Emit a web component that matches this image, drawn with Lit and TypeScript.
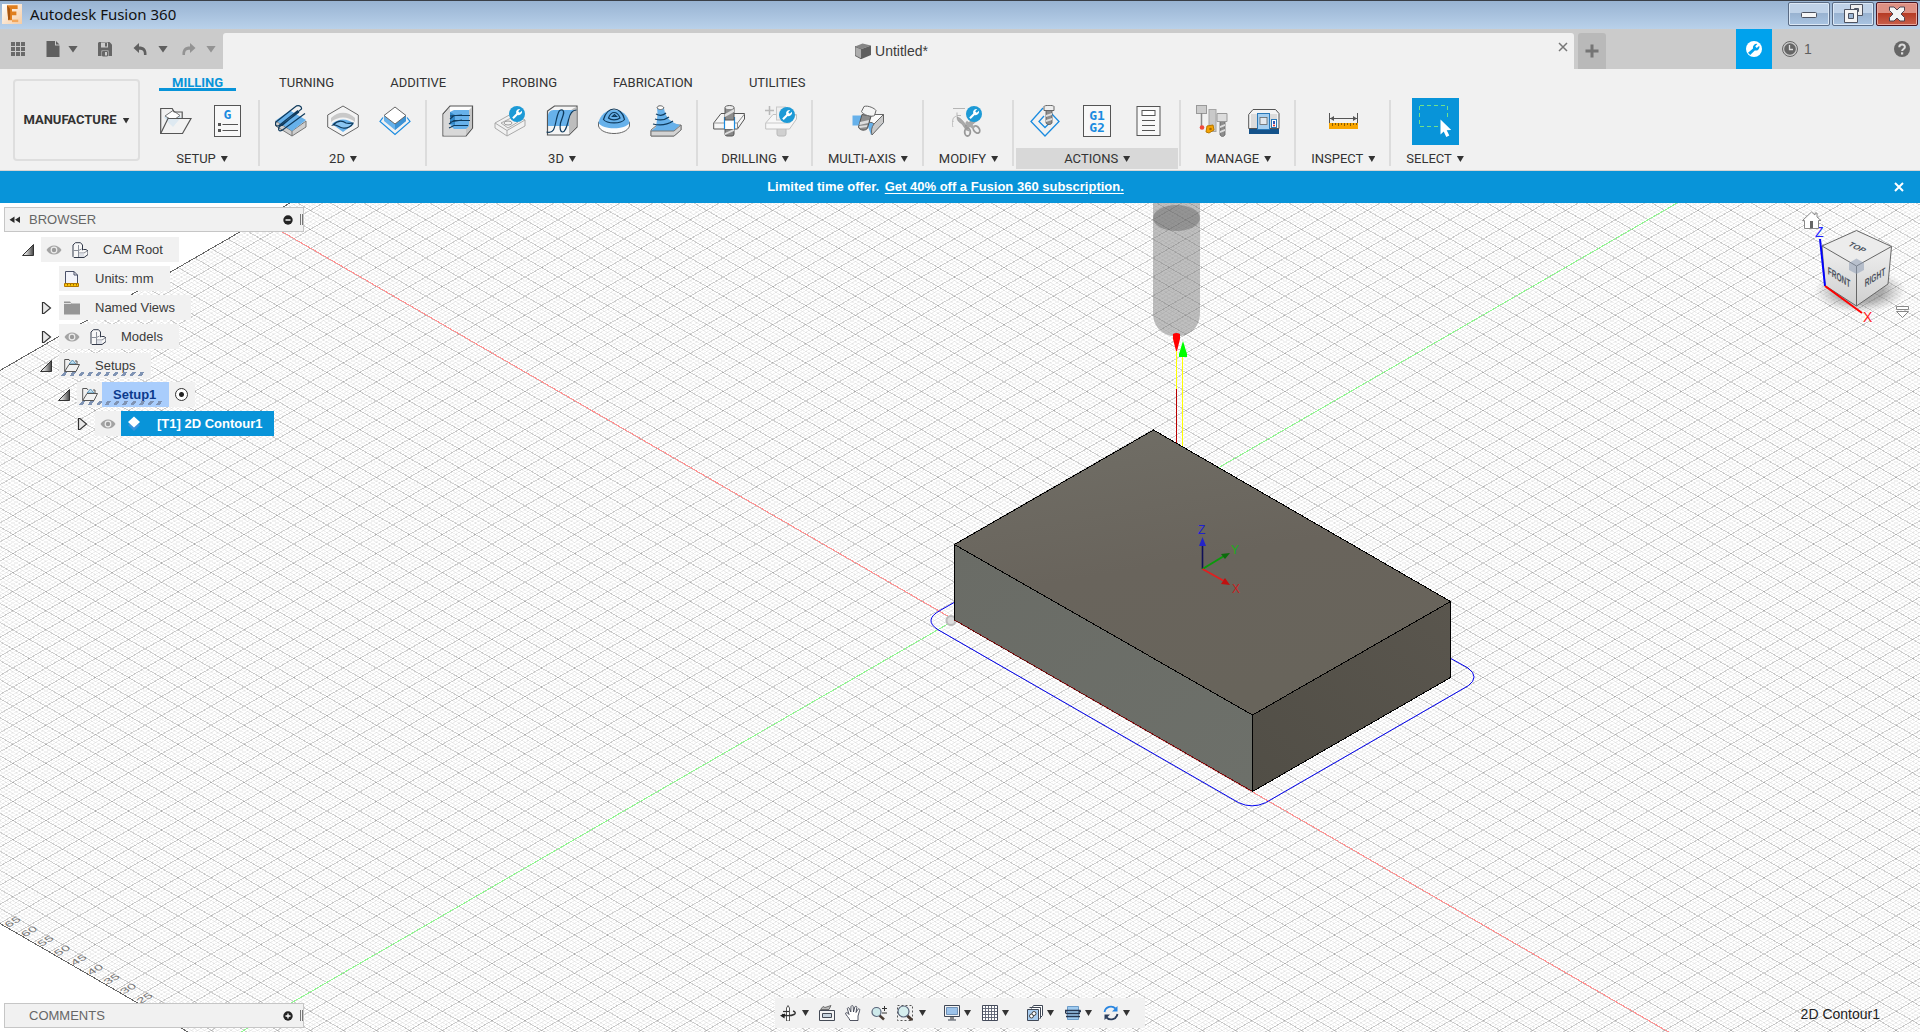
import { LitElement, html, svg, css, nothing } from "lit";
import { customElement, property, state } from "lit/decorators.js";

/* ---------- icon artwork ---------- */

const wrenchBadge = (x: number, y: number) => svg`
  <circle cx=${x} cy=${y} r="8" fill="#1d9ad6"/>
  <path transform="translate(${x - 8} ${y - 8})" d="M3.2 11.400 7.200 7.400A3.500 3.500 0 0 1 11.200 3L9.200 5.200 10.700 6.700 13 4.700A3.500 3.500 0 0 1 8.700 9L4.700 13Z" fill="#fff"/>`;

const ICONS: Record<string, any> = {
  setup: svg`
    <path d="M4 12 13 5l8 7-8 10z" fill="#cfe2ee"/><path d="M5 11 13 5.500l7 5-7 5z" fill="#fff" stroke="#777"/>
    <path d="M.7 28.500V3.500h11.500l2 3.500h8v6" fill="none" stroke="#555" stroke-width="1.200"/>
    <path d="M8 13.500h12l-7 8-6-5z" fill="#cfe2ee"/>
    <path d="M.7 28.500 8 13.500h23L22.500 28.500z" fill="#f4f4f4" fill-opacity=".4" stroke="#555" stroke-width="1.200"/>`,
  gsheet: svg`
    <rect x="2.500" y=".5" width="26" height="31" fill="#f8f8f8" stroke="#555"/>
    <text x="15.500" y="14" class="mono" font-size="13" text-anchor="middle">G</text>
    <path d="M6 18h3v3H6zM6 24h3v3H6z" fill="#555"/><path d="M10.500 19.500h15.500M10.500 25.500h15.500" stroke="#555"/>`,
  adaptive: svg`
    <path d="M.7 16v5L17 31l14-9v-6L17 26z" fill="#cfcfcf" stroke="#777"/><path d="M17 26v5" stroke="#777"/>
    <path d="M.7 15.500 15 5.500l16 9.500-14 11z" fill="#67b1ea"/>
    <path d="M1 17 20 2c3-2.500 7-1 6.500 2L7 20.500M4 22 24 7M4 22c-1 3 0 5 3.500 3L30 8.500M1 17c-1.500 2.500 0 5 3 3.500L23 5.500" fill="none" stroke="#0f3a5c" stroke-width="1.200"/>`,
  pocket: svg`
    <path d="M16 1 31.300 10v12L16 31 .7 22V10z" fill="#f4f4f4" stroke="#666"/>
    <path d="M4 13c7-7 17-7 24 0v4c-7-6-17-6-24 0z" fill="#c9c9c9"/>
    <path d="M5 19c6-6 16-6 22 0l-11 8z" fill="#67b1ea"/>
    <path d="M6 20c5-5 10-4 13-2 3 1 5 0 7 0-1 3-6 6-10 5-4 0-6-4-10-3z" fill="#8ac5f1" stroke="#0f3a5c" stroke-width="1.200"/>`,
  contour: svg`
    <path d="M4 12.500 1 16.500 16 29.500 31 16.500 28 12.500" fill="none" stroke="#1a8be0" stroke-width="1.200"/>
    <path d="M5 10v6l11 9 11-9v-6l-11 9z" fill="#67b1ea"/><path d="M16 19v6l11-9v-6z" fill="#3d92d4"/>
    <path d="M16 2 27 10.500 16 19 5 10.500z" fill="#fff" stroke="#666"/>`,
  clear3d: svg`
    <path d="M1 31V9l7-8h22.500v22L24 31z" fill="#fdfdfd" stroke="#555" stroke-width="1.200"/>
    <path d="M1.500 30.500V9.500L8 2v20h16v8.500z" fill="#d8d8d8"/><path d="M24 30 30 23V2L27 5v15l-3 3z" fill="#c5c5c5"/>
    <path d="M8 7l4-2h15v16l-3 3H12l-4-4z" fill="#67b1ea"/><path d="M8 7l5 3v10l-5-1z" fill="#3489c9"/>
    <path d="M28 10.500H12L8 14M28 15.500H12L7 19M26 20.500H12L7 23M8 11l12-1M8 17l12-2" fill="none" stroke="#0f3a5c" stroke-width="1.200"/>`,
  flat3d: svg`
    <path d="M1 18 19 8l12 7v6L13 31 1 23z" fill="#f2f2f2" stroke="#aaa"/><path d="M1 18l12 7.500L31 15M13 25.500V31" fill="none" stroke="#aaa"/>
    <path d="M7 18l10-5 7 4-10 6z" fill="none" stroke="#aaa"/><ellipse cx="14" cy="18" rx="4" ry="2" fill="none" stroke="#999"/>${wrenchBadge(23, 9)}`,
  parallel: svg`
    <path d="M1.500 30V6l7-5h22.500v21l-8 8z" fill="#f5f5f5" stroke="#555" stroke-width="1.200"/>
    <path d="M23 29.500V10c1-5 4-7 7.500-8v20z" fill="#bdbdbd"/>
    <path d="M2 21V10c1-4 3-5 7-5h20c-4 2-5 5-6 9v7z" fill="#67b1ea"/>
    <path d="M.5 27c7 2 8-3 10-13 2-8 3-10 6-9 3 2 0 6-2 13-1 6 0 9 2 9 3 0 4-5 6-12 1-5 3-10 8-10" fill="none" stroke="#0f3a5c" stroke-width="1.200"/>`,
  scallop: svg`
    <path d="M.5 17v4c3 10 28 10 31 0v-4z" fill="#fcfcfc" stroke="#666"/>
    <path d="M.5 18C3 .5 29 .5 31.500 18 27 25 5 25 .5 18z" fill="#67b1ea"/>
    <path d="M5.500 14.500C8 6 13 4 16 4c4 0 9 3 10.500 10.500C23 19 9 19 5.500 14.500zM10.500 13C12 9 14 7.500 16 7.500S20.500 9 22 13c-3 2.500-9 2.500-11.500 0zM14.500 11.500l2-2 2 2z" fill="none" stroke="#0f3a5c" stroke-width="1.200"/>`,
  steep: svg`
    <path d="M1 25 7 20h24v5l-7 6H1z" fill="#d9d9d9" stroke="#777"/>
    <path d="M6 22C7 15 8 8 7 3h7c1 9 7 15 16 17l-6 6H1z" fill="#67b1ea"/><path d="M7 3c0-3 6-3 7 0-2 2-5 2-7 0z" fill="#fff" stroke="#666"/>
    <path d="M6 9c4 2 8 1 10-1M5 14c6 2 10 1 14-2M3 19c8 2 14 1 20-3" fill="none" stroke="#0f3a5c" stroke-width="1.200"/>
    <path d="M1 26h23l7-6v5l-7 6H1z" fill="#d3d3d3" stroke="#777"/>`,
  drill: svg`
    <rect x="12" y="22" width="9" height="9" rx="2" fill="#888" stroke="#555"/>
    <path d="M.7 18 8 8.500h23.500V14L24.500 24H.7z" fill="#f6f6f6" stroke="#555"/><path d="M24.500 24v-6l7-9" fill="none" stroke="#888"/><path d="M1 18h23.500" stroke="#999"/>
    <path d="M12 13h9v11h-9z" fill="#fff"/><path d="M11.500 12v12M21.500 12v12" stroke="#1a8be0" stroke-width="1.200"/>
    <path d="M12 2.500c0-2.500 9-2.500 9 0V15h-9z" fill="#8d8d8d" stroke="#555"/><path d="M12 9l9-5v3l-9 5z" fill="#ddd"/><path d="M12 28l9-4v2l-9 4z" fill="#ddd"/><ellipse cx="16.500" cy="2.500" rx="4" ry="1.500" fill="#eee"/>`,
  drillNew: svg`
    <g opacity=".45"><rect x="12" y="22" width="9" height="9" rx="2" fill="#aaa" stroke="#777"/>
    <path d="M.7 18 8 9.500h23.500V14L24.500 24H.7z" fill="#fff" stroke="#888"/><path d="M1 18h23.500l6-8" fill="none" stroke="#999"/><rect x="11.500" y="2" width="9" height="13" fill="#eee" stroke="#999"/>
    <path d="M4.500 1v9M0 5.500h9" stroke="#777" stroke-width="1.500"/></g>${wrenchBadge(22, 10)}`,
  multi: svg`
    <path d="M.5 10.500H20v10H.5z" fill="#67b1ea"/><path d="M14 16 22 10h9.500v8L19 30z" fill="#67b1ea"/>
    <path d="M22 19 31.500 9.500v8L20 30c-1-4-.5-8 2-11z" fill="#c9c9c9" stroke="#666"/><path d="M20 9.500h11.500L22 19c-2-2-4-2-6-1z" fill="#fafafa" stroke="#666"/>
    <path d="M10 9.500 6.500 22c1 4 8 4 9 1L19 11z" fill="#8d8d8d" stroke="#555"/><path d="M8 17l9-2-.7 3-9 2zM7 21l8.500-1-.7 2-7 1z" fill="#ddd"/>
    <path d="M12 1.500c4-1.500 11 2 12 4l-1.500 5C20 12.500 11 10 9.500 6.500z" fill="#f4f4f4" stroke="#666"/>`,
  modify: svg`
    <path d="M1 3.500h12M5 7.500v3h4M1 17c-1-3 1-6 5-6" fill="none" stroke="#b5b5b5"/><path d="M1 22c-1-2-1-4 0-6" fill="none" stroke="#bbb"/>
    <path d="M5 12c4 1 6 4 9 8l3 6-3-1-4-6c-3-2-5-3-5-7zM27 14 15 24l-2-3 10-9z" fill="#a9a9a9" stroke="#888" stroke-width=".5"/>
    <ellipse cx="15.500" cy="27" rx="2.800" ry="4" fill="none" stroke="#999" stroke-width="1.800"/><ellipse cx="24.500" cy="24.500" rx="2.800" ry="4" transform="rotate(-35 24.500 24.500)" fill="none" stroke="#999" stroke-width="1.800"/><path d="M14 17l8 6" stroke="#a9a9a9" stroke-width="3"/>${wrenchBadge(22, 9)}`,
  simulate: svg`
    <path d="M14 3 2 16.500 16 31 30 16.500 22 8" fill="none" stroke="#1a8be0" stroke-width="1.300"/><path d="M15 11l-5 5.500 6 6 6-6-3-3" fill="none" stroke="#1a8be0" stroke-width="1.300"/>
    <path d="M17 5h6v13c-1 2-5 2-6 0z" fill="#8d8d8d" stroke="#555" stroke-width=".8"/><path d="M17 10l6-2v2l-6 2zM17 15l6-2v2l-6 2z" fill="#ddd"/><path d="M15 1.500c0-1.500 10-1.500 10 0v4H15z" fill="#eee" stroke="#666"/>`,
  post: svg`
    <rect x="2.500" y=".5" width="27" height="31" fill="#f8f8f8" stroke="#555"/>
    <text x="16" y="15" class="mono" font-size="13" text-anchor="middle">G1</text><text x="16" y="26.500" class="mono" font-size="13" text-anchor="middle">G2</text>`,
  sheet: svg`
    <rect x="4" y="1.500" width="23" height="29" fill="#f8f8f8" stroke="#555"/><rect x="9" y="5.500" width="13" height="5" fill="#fff" stroke="#555"/>
    <path d="M9 15.500h13M9 20.500h13M9 25.500h13" stroke="#555"/>`,
  tools: svg`
    <rect x=".5" y=".5" width="10" height="8" fill="#ccc" stroke="#999"/><path d="M5.500 8v13" stroke="#888" stroke-width="1.500"/><circle cx="6" cy="22.500" r="2.300" fill="#f24a3d"/>
    <rect x="13" y="4.500" width="7" height="22" fill="#c9c9c9" stroke="#a5a5a5"/><path d="M11 21l6-1 1 5-5 3-3-1z" fill="#f5a300" stroke="#b87900"/><circle cx="14.500" cy="24" r="1.300" fill="#a86b00"/>
    <path d="M24 16h5v14l-2.500 2L24 30z" fill="#8d8d8d" stroke="#666" stroke-width=".8"/><path d="M24 21l5-2v2l-5 2zM24 26l5-2v2l-5 2z" fill="#ddd"/><path d="M21 8.500h10v8H21z" fill="#ddd" stroke="#999"/>`,
  machine: svg`
    <path d="M1 29V23h30v6z" fill="#14528a"/><path d="M.7 23.500V9.500L5 4.500h22.500L31 8.500V23.500z" fill="#f4f4f4" stroke="#555"/><path d="M3 9h26v14H3z" fill="#dcdcdc"/>
    <rect x="9.500" y="8.500" width="12" height="16" fill="#a5cff0" stroke="#2a79b8"/><rect x="12" y="12.500" width="7" height="7" fill="#e3e9ee" stroke="#666" stroke-width=".8"/>
    <rect x="23.500" y="14.500" width="5" height="8" fill="#fff" stroke="#2a79b8"/><path d="M25 16h2v3h-2z" fill="#3656b5"/><circle cx="26" cy="20.500" r="1" fill="#d22"/>`,
  inspect: svg`
    <path d="M2.500 8v10M30.500 8v10M3 13.500h27" stroke="#555"/><path d="M3 13.500l4-2.500v5zM30 13.500l-4-2.500v5z" fill="#555"/>
    <rect x="2" y="18" width="29" height="6" fill="#f9a600"/><path d="M5.500 18v3M8.500 18v2M11.500 18v3M14.500 18v2M17.500 18v3M20.500 18v2M23.500 18v3M26.500 18v2M29.500 18v2" stroke="#8a5c00"/>`,
  select: svg`
    <path d="M1 .5h27M.5 1v21M28.500 1v13M1 21.500h18" stroke="#6fe08a" stroke-dasharray="4 3" fill="none"/>
    <path d="M21.500 14.500V29.500l3.200-3 2.600 5.500 3-1.400-2.600-5.300 4.600-.3z" fill="#fff"/>`,
  /* 16px set */
  apps: svg`<path d="M1 1h4v4H1zM6 1h4v4H6zM11 1h4v4h-4zM1 6h4v4H1zM6 6h4v4H6zM11 6h4v4h-4zM1 11h4v4H1zM6 11h4v4H6zM11 11h4v4h-4z" fill="#6a6a6a"/>`,
  file: svg`<path d="M1.500 0h8.500v4.500h4.500V16h-13zM11 0l3.500 3.500H11z" fill="#5f5f5f"/>`,
  save: svg`<path d="M2 1h10.500L15 3.500V15H1V2z" fill="#666"/><path d="M4 1.500h7v5H4zM4.500 9.500h7v5.500h-7z" fill="#cbcbcb"/><path d="M8 2h2v3.500H8zM6 11h2v4H6z" fill="#666"/><path d="M5.500 10.500h5V15h-5z" fill="none" stroke="#666"/>`,
  undo: svg`<path d="M7 2 1.500 7l5.500 5V8.700c4 0 5 1.300 5 5.300h2.500C15 8 12 5.500 7 5.500z" fill="#606060"/>`,
  redo: svg`<path d="M9 2l5.500 5L9 12V8.700c-4 0-5 1.300-5 5.300H1.500C1 8 4 5.500 9 5.500z" fill="#939393"/>`,
  doc: svg`<path d="M0 3.500 6.500 6v10L0 12.500z" fill="#adadad" stroke="#666"/><path d="M0 3.500 7.500.5 16 2.500 6.500 6z" fill="#868686"/><path d="M6.500 6 16 2.500V12l-9.500 4z" fill="#5f5f5f"/>`,
  wrench: svg`<circle cx="8" cy="8" r="8" fill="#fff"/><path d="M2 11.800 7 7.600A3.800 3.800 0 0 1 11.400 2.900L9.200 5.300 10.700 6.900 13.300 4.700A3.800 3.800 0 0 1 8.800 9.500L4.200 14z" fill="#00a2ed"/>`,
  clock: svg`<circle cx="8" cy="8" r="7.500" fill="#cbcbcb" stroke="#666"/><circle cx="8" cy="8" r="5.800" fill="#666"/><path d="M7.500 4v4.500H11" fill="none" stroke="#ddd" stroke-width="1.300"/>`,
  help: svg`<circle cx="8" cy="8" r="8" fill="#666"/><path d="M5.300 6.200c0-3.500 5.600-3.500 5.600-.2 0 1.900-2.800 2-2.800 4" fill="none" stroke="#ddd" stroke-width="2"/><path d="M7 11.300h2.200v2.200H7z" fill="#ddd"/>`,
  close: svg`<path d="M4 4l8 8M12 4l-8 8" stroke="currentColor" stroke-width="2"/>`,
  plus: svg`<path d="M1.500 8h13M8 1.500v13" stroke="#757575" stroke-width="3"/>`,
  eye: svg`<path d="M.5 8C4 2 12 2 15.500 8 12 14 4 14 .5 8z" fill="#a3a3a3"/><circle cx="8" cy="8" r="2.800" fill="#9a9a9a" stroke="#ececec" stroke-width="1.200"/>`,
  body: svg`<path d="M1 3 3.500.7h5L10.500 3v5l1-.5h2.500l2 1.500v3.500L12 15.500H2L1 14.500z" fill="#f8f8f8" stroke="#333a4a"/><path d="M1.500 8.500h5v6.500M6.500 8.500 9.500 7M6.500 8.500V3M7 11h5l3-2" fill="none" stroke="#8a8f99"/><path d="M7 11.500h5v3.500H7z" fill="#dcdfe6"/>`,
  units: svg`<path d="M1.500 13V.5H10L13.500 4v9z" fill="#f3f4fa" stroke="#4a5068"/><path d="M10 .5V4h3.500" fill="none" stroke="#4a5068"/><path d="M.5 12.500h14v3H.5z" fill="#f9c208" stroke="#b37700"/><path d="M3.500 13v1.500M6.500 13v1.500M9.500 13v1.500M12.500 13v1.500" stroke="#7a5200" stroke-width=".8"/>`,
  folder: svg`<path d="M0 1.500h6l1.500 2H16V14.500H0z" fill="#969696"/><path d="M0 3.500h7" stroke="#e2e2e2"/>`,
  open: svg`<path d="M5 6l3.500-4L12 6z" fill="#bfe0f2" stroke="#5c92b5"/><path d="M.7 13.500V1.500H5l1 1.500M11 3h2v3" fill="none" stroke="#555"/><path d="M.7 13.500 5 6.500h10.500L12 13.500z" fill="#f1f1f1" stroke="#555"/>`,
  contourSmall: svg`<path d="M8 5 14 9 8 15 2 9z" fill="#3a93dc"/><path d="M8 .5 14 6 8 11.500 2 6z" fill="#fff"/>`,
  back: svg`<path d="M7.500 4.500v6.500L2.500 7.800zM13 4.500v6.500L8 7.800z" fill="#2a2a2a"/>`,
  minus: svg`<circle cx="8" cy="8" r="4.700" fill="#222"/><path d="M5.500 8h5" stroke="#fff" stroke-width="1.400"/>`,
  add: svg`<circle cx="8" cy="8" r="4.700" fill="#222"/><path d="M5.500 8h5M8 5.500v5" stroke="#fff" stroke-width="1.300"/>`,
  expanded: svg`<defs><linearGradient id="tg"><stop offset=".3" stop-color="#ddd"/><stop offset="1" stop-color="#444"/></linearGradient></defs><path d="M2.500 13.500 13.500 2.500v11z" fill="url(#tg)" stroke="#333"/>`,
  collapsed: svg`<path d="M4.500 2.500H6L12.500 8 6 13.500H4.500z" fill="#e8e8e8" stroke="#333" stroke-width="1.200"/>`,
  orbit: svg`<path d="M6.500 16V3L8 .5 9.500 3v13z" fill="#fff" stroke="#444" stroke-width=".9"/><path d="M13 6c2.500.5 3 2.500 1 3.500-3 1.500-9 1.500-12 0" fill="none" stroke="#333" stroke-width="1.400"/><path d="M3 6.500h6" stroke="#333" stroke-width="1.200"/><path d="M5 8.500 0 10.500l4.500 3z" fill="#222"/>`,
  look: svg`<path d="M.5 5.500h15v10H.5z" fill="#f4f4f4" stroke="#444a55"/><path d="M3.500 8.500h9v4h-9z" fill="#c8d4de" stroke="#444a55"/><path d="M1.500 4.500 4 1.500l2 1 6-2-2 4z" fill="#bbb" stroke="#555" stroke-width=".8"/>`,
  hand: svg`<path d="M5 15.500C4 12.500 1 10.500.5 8.200 1.500 7 3 8 4 9.500L2.300 3.500c.7-1.500 1.900-.8 2.300.4L5.800 7 6 1.500c.6-1.300 2-1.200 2.200 0L8.500 7l1.300-5c.7-1.200 2-.8 2 .4L11 7.500l2-3.300c.9-.9 2-.2 1.700 1L13 11v4.500z" fill="#fff" stroke="#3d4250" stroke-width=".9"/>`,
  zoom: svg`<path d="M8 10l5 4.500" stroke="#4a3c34" stroke-width="2.500"/><circle cx="5.500" cy="7" r="4.500" fill="#cde9ea" stroke="#59657a" stroke-width="1.200"/><path d="M11 3.500h5M13.500 1v5M11 8h5" stroke="#333"/>`,
  window: svg`<path d="M.5.5h15v15H.5z" fill="none" stroke="#555" stroke-dasharray="2 2"/><path d="M10 10.500l5 4.500" stroke="#4a3c34" stroke-width="3"/><circle cx="6.500" cy="6.500" r="5.500" fill="#d5eeee" stroke="#59657a" stroke-width="1.200"/>`,
  display: svg`<path d="M.5.5h15v11H.5z" fill="#f4f4f4" stroke="#3f4755"/><path d="M2.500 2.500h11v7h-11z" fill="#9cc3ea" stroke="#5b7fa8" stroke-width=".8"/><path d="M6 12h4v2.500H6z" fill="#888"/><path d="M4 15h8" stroke="#3f4755"/>`,
  grid: svg`<path d="M.5.5h15v15H.5z" fill="#fff" stroke="#444a5a"/><path d="M3.500 1v14M6.500 1v14M9.500 1v14M12.500 1v14M1 3.500h14M1 6.500h14M1 9.500h14M1 12.500h14" stroke="#5a6070" stroke-width=".9"/>`,
  views: svg`<path d="M4.500 3.500 6.500.5h9v10l-3 3" fill="#fff" stroke="#3f4755"/><path d="M.5 4.500h11v11H.5z" fill="#a9cdf0" stroke="#3f4755"/><path d="M2.500 2.500h11v11" fill="none" stroke="#3f4755"/><circle cx="4.500" cy="11" r="2" fill="#fff" stroke="#444"/><circle cx="7" cy="8.500" r="2" fill="#fff" stroke="#444"/>`,
  slice: svg`<path d="M2.500 1.500h11v13h-11z" fill="#9fcbf0" stroke="#6d9cc8"/><path d="M0 5.500h15l1 1.500M1 8.500h14M1 11.500h14M15 5.500l-1 2M0 8.500l1-2.500" stroke="#26354f" stroke-width="1.400" fill="none"/>`,
  refresh: svg`<path d="M1.500 7C2.500 1.500 9 0 12.500 3.500" fill="none" stroke="#2a86e0" stroke-width="1.800"/><path d="M14.500 1v5.500H9z" fill="#2a86e0"/><path d="M14.500 9c-1 5.500-7.500 7-11 3.500" fill="none" stroke="#2b3d5c" stroke-width="1.800"/><path d="M1.500 15V9.500H7z" fill="#2b3d5c"/>`,
  logo: svg`<defs><linearGradient id="lg" x2="1" y2="1"><stop stop-color="#fff"/><stop offset="1" stop-color="#f6cba0"/></linearGradient></defs><path d="M0 0h16v16H0z" fill="url(#lg)"/><path d="M4 1h8.500v3H8v2h3.500v3H8v4H5z" fill="#e07f1e"/><path d="M4 1l2.500 3v8L5 13z" fill="#a9550f"/><path d="M8 12.500h5v2H8z" fill="#f2a65a"/>`,
};

const icon = (name: string, size = 16) => {
  const box = size >= 32 ? 32 : 16;
  return html`<svg class="icon" aria-hidden="true" width=${size} height=${size} viewBox="0 0 ${box} ${box}">${ICONS[name]}</svg>`;
};
const caret = html`<span class="caret"></span>`;

const shared = css`
  :host { font-family: "Liberation Sans", Arial, sans-serif; font-size: 13px; line-height: 16px; color: #333; }
  * { box-sizing: border-box; }
  button { font: inherit; color: inherit; background: none; border: 0; padding: 0; margin: 0; display: inline-flex; align-items: center; justify-content: center; cursor: default; }
  .icon { display: block; flex: none; }
  .mono { font-family: "DejaVu Sans Mono", monospace; font-weight: 700; fill: #1a8be0; }
  .caret { width: 7px; height: 6px; flex: none; background: currentColor; clip-path: polygon(0 0, 100% 0, 50% 100%); }
`;

/* ---------- title bar and document tabs ---------- */

@customElement("app-titlebar")
export class AppTitlebar extends LitElement {
  static styles = [shared, css`
    :host { display: block; }
    .bar { display: flex; align-items: center; height: 29px; border-top: 1px solid #3a3f47; background: linear-gradient(#98b3d2, #b9d1ea); padding: 0 2px 2px; }
    .name { margin: 0 auto 0 8px; font: 400 15px/20px "Noto Sans", "Open Sans", sans-serif; color: #111; }
    .win { display: flex; gap: 2px; align-self: flex-start; }
    .win button { width: 42px; height: 24px; margin-top: 1px; border: 1px solid #5a6b84; border-radius: 2px; box-shadow: inset 0 0 0 1px #dbe8f6; background: linear-gradient(#bfd2e8 45%, #98b2d0 46%, #a9c4e2); }
    .win .x { border-color: #4a1420; box-shadow: inset 0 0 0 1px #e9a79c; background: linear-gradient(#dd9083 45%, #b53a24 46%, #c9604c); }
  `];
  render() {
    return html`<header class="bar">
      ${icon("logo", 20)}<span class="name">Autodesk Fusion 360</span>
      <div class="win">
        <button aria-label="Minimize"><svg width="18" height="18"><rect x="1.500" y="7.500" width="15" height="5" rx="1" fill="#f6f6f6" stroke="#4c5260"/></svg></button>
        <button aria-label="Restore"><svg width="22" height="22"><path d="M8.500 1.500h12v11h-12z" fill="#eee" stroke="#4c5260"/><path d="M12.500 5.500h4v3h-4z" fill="#9cb5d2" stroke="#4c5260"/><path d="M2.500 6.500h13v13h-13z" fill="#f4f4f4" stroke="#4c5260"/><path d="M6.500 10.500h5v5h-5z" fill="#9cb5d2" stroke="#4c5260"/></svg></button>
        <button class="x" aria-label="Close"><svg width="18" height="16"><path d="M1.500 1h4.500l3 3 3-3h4.500v3.500L13 8l3.500 3.500V15H12l-3-3-3 3H1.500v-3.500L5 8 1.500 4.500z" fill="#f4f4f4" stroke="#4c4452"/></svg></button>
      </div>
    </header>`;
  }
}

@customElement("app-docbar")
export class AppDocbar extends LitElement {
  static styles = [shared, css`
    :host { display: block; }
    .bar { display: flex; height: 40px; background: #cbcbcb; color: #5f5f5f; }
    .quick { display: flex; align-items: center; width: 223px; padding-left: 10px; }
    .quick .caret { width: 10px; height: 7px; }
    .with { gap: 7px; }
    .file { margin-left: 19px; }
    .save { margin-left: 19px; }
    .undo { margin-left: 19px; gap: 10px; }
    .redo { margin-left: 13px; gap: 9px; color: #939393; }
    .tab { flex: 1; display: flex; align-items: center; margin-top: 4px; padding-left: 8px; background: #f1f1f1; border-radius: 3px 3px 0 0; color: #3c3c3c; }
    .doc { flex: 1; gap: 4px; font-size: 14px; }
    .shut { width: 22px; height: 16px; margin-bottom: 8px; color: #777; }
    .new { width: 28px; margin: 4px 130px 0 4px; background: #b9b9b9; border-radius: 3px 3px 0 0; }
    .ext { width: 36px; background: #00a2ed; }
    .jobs { gap: 6px; padding: 0 10px; font-size: 14px; }
    .help { margin: 0 10px 0 auto; }
    .right { display: flex; width: 148px; }
  `];
  render() {
    return html`<nav class="bar">
      <div class="quick">
        <button aria-label="Data panel">${icon("apps")}</button>
        <button class="with file" aria-label="File">${icon("file")}${caret}</button>
        <button class="save" aria-label="Save">${icon("save")}</button>
        <button class="with undo" aria-label="Undo">${icon("undo")}${caret}</button>
        <button class="with redo" aria-label="Redo">${icon("redo")}${caret}</button>
      </div>
      <div class="tab"><button class="doc">${icon("doc")}Untitled*</button><button class="shut" aria-label="Close document"><svg width="10" height="10"><path d="M1 1l8 8M9 1L1 9" stroke="currentColor" stroke-width="1.500"/></svg></button></div>
      <button class="new" aria-label="New document">${icon("plus")}</button>
      <button class="ext" aria-label="Extensions">${icon("wrench")}</button>
      <div class="right"><button class="jobs" aria-label="Job status">${icon("clock")}1</button><button class="help" aria-label="Help">${icon("help")}</button></div>
    </nav>`;
  }
}

/* ---------- ribbon ---------- */

const GROUPS: { label: string; icons: string[]; hot?: boolean; pick?: boolean }[] = [
  { label: "SETUP", icons: ["setup", "gsheet"] },
  { label: "2D", icons: ["adaptive", "pocket", "contour"] },
  { label: "3D", icons: ["clear3d", "flat3d", "parallel", "scallop", "steep"] },
  { label: "DRILLING", icons: ["drill", "drillNew"] },
  { label: "MULTI-AXIS", icons: ["multi"] },
  { label: "MODIFY", icons: ["modify"] },
  { label: "ACTIONS", icons: ["simulate", "post", "sheet"], hot: true },
  { label: "MANAGE", icons: ["tools", "machine"] },
  { label: "INSPECT", icons: ["inspect"] },
  { label: "SELECT", icons: ["select"], pick: true },
];

@customElement("app-ribbon")
export class AppRibbon extends LitElement {
  @state() tab = "MILLING";
  static styles = [shared, css`
    :host { display: block; font-family: Roboto, "Liberation Sans", sans-serif; }
    .ribbon { display: flex; height: 102px; background: #f1f1f1; border-bottom: 1px solid #d5d5d5; padding-left: 13px; }
    .space { width: 127px; height: 82px; margin: 10px 5px 0 0; gap: 6px; border: 2px solid #dedede; border-radius: 4px; font-weight: 700; white-space: nowrap; }
    .space .caret { margin-top: 1px; }
    .tabs { display: flex; gap: 30px; padding-left: 14px; height: 22px; }
    .tabs button { padding: 6px 13px 0; }
    .tabs .on { color: #0894d9; box-shadow: inset 0 -3px #0894d9; font-weight: 700; }
    .groups { display: flex; height: 78px; }
    .sep { width: 2px; margin: 9px 0 3px; background: #dcdcdc; flex: none; }
    .group { display: flex; flex-direction: column; padding: 0 14px 0 15px; }
    .icons { display: flex; justify-content: center; align-items: center; gap: 20px; height: 57px; padding-top: 3px; }
    .label { height: 21px; gap: 5px; margin: 0 -13px; padding: 1px 13px 0; white-space: nowrap; }
    .hot { background: #d8d8d8; }
    .pick { width: 47px; height: 47px; background: #0894d9; }
  `];
  render() {
    return html`<section class="ribbon">
      <button class="space">MANUFACTURE${caret}</button>
      <div>
        <div class="tabs">${["MILLING", "TURNING", "ADDITIVE", "PROBING", "FABRICATION", "UTILITIES"].map(
          (t) => html`<button class=${t === this.tab ? "on" : ""} @click=${() => (this.tab = t)}>${t}</button>`)}</div>
        <div class="groups">${GROUPS.map((g, i) => html`
          ${i ? html`<div class="sep"></div>` : nothing}
          <div class="group">
            <div class="icons">${g.icons.map((n) => html`<button class=${g.pick ? "pick" : ""} aria-label="${g.label} ${n}">${icon(n, 32)}</button>`)}</div>
            <button class="label ${g.hot ? "hot" : ""}">${g.label}${caret}</button>
          </div>`)}</div>
      </div>
    </section>`;
  }
}

@customElement("app-offer")
export class AppOffer extends LitElement {
  static styles = [shared, css`
    :host { display: block; }
    .offer { display: flex; align-items: center; height: 32px; background: #0894d9; color: #fff; font-weight: 700; }
    p { flex: 1; margin: 0; text-align: center; }
    a { color: inherit; margin-left: 2px; text-underline-offset: 2px; }
    button { width: 16px; margin-right: 13px; }
  `];
  render() {
    return html`<aside class="offer"><p>Limited time offer. <a href="#offer">Get 40% off a Fusion 360 subscription.</a></p>
      <button aria-label="Dismiss">${icon("close")}</button></aside>`;
  }
}

/* ---------- browser tree ---------- */

interface Node { text: string; level: number; toggle?: "expanded" | "collapsed"; eye?: boolean; glyph: string; kind?: string; stitched?: boolean; }
const TREE: Node[] = [
  { text: "CAM Root", level: 0, toggle: "expanded", eye: true, glyph: "body" },
  { text: "Units: mm", level: 1, glyph: "units" },
  { text: "Named Views", level: 1, toggle: "collapsed", glyph: "folder" },
  { text: "Models", level: 1, toggle: "collapsed", eye: true, glyph: "body" },
  { text: "Setups", level: 1, toggle: "expanded", glyph: "open", stitched: true },
  { text: "Setup1", level: 2, toggle: "expanded", glyph: "open", kind: "active", stitched: true },
  { text: "[T1] 2D Contour1", level: 3, toggle: "collapsed", eye: true, glyph: "contourSmall", kind: "chosen" },
];

@customElement("app-panel")
export class AppPanel extends LitElement {
  @property() heading = "";
  @property({ type: Boolean }) collapsed = false;
  static styles = [shared, css`
    :host { display: block; }
    .head { display: flex; align-items: center; height: 25px; padding-left: 2px; background: #f1f1f1; border: 1px solid #c6c6c6; color: #666; }
    .head h2 { flex: 1; margin: 0 0 0 6px; font-size: 13px; font-weight: 400; line-height: 16px; }
    .gap { width: 16px; height: 16px; }
    .grip { width: 3px; height: 11px; margin-left: 4px; border: solid #777; border-width: 0 1px; }
  `];
  render() {
    return html`<div class="head">
      ${this.collapsed ? html`<span class="gap"></span>` : html`<button aria-label="Dock">${icon("back")}</button>`}
      <h2>${this.heading}</h2>
      <button aria-label="Toggle ${this.heading}">${icon(this.collapsed ? "add" : "minus")}</button><span class="grip"></span>
    </div>`;
  }
}

@customElement("app-tree")
export class AppTree extends LitElement {
  static styles = [shared, css`
    :host { display: block; }
    ul { list-style: none; margin: 5px 0 0; padding: 0; display: flex; flex-direction: column; gap: 4px; }
    li { display: flex; align-items: center; height: 25px; }
    .l0 { padding-left: 16px; } .l1 { padding-left: 34px; } .l2 { padding-left: 52px; } .l3 { padding-left: 70px; }
    .toggle { width: 16px; height: 16px; margin-right: 5px; }
    .chip { display: flex; align-items: center; height: 25px; background: #f1f1f1; padding: 0 16px 0 5px; position: relative; }
    .eye { margin-right: 10px; }
    .text { margin-left: 15px; white-space: nowrap; color: #3a3a3a; }
    .stitched::after { content: ""; position: absolute; left: 0; bottom: 2px; width: 88px; height: 4px; background: repeating-linear-gradient(125deg, transparent 0 4px, #7f93b3 4px 7px); }
    .active { padding-right: 0; }
    .active .text { margin-left: 4px; line-height: 25px; padding: 0 13px 0 11px; background: #a9cdfc; color: #0c3a8c; font-weight: 700; }
    input { appearance: none; width: 13px; height: 13px; margin: 0 7px 0 6px; border: 1px solid #333; border-radius: 50%; background: radial-gradient(circle, #222 0 2px, #fff 3px); }
    .chosen { padding-right: 0; }
    .chosen .eye { margin-right: 5px; }
    .sel { display: flex; align-items: center; height: 25px; padding: 0 12px 0 5px; background: #0894d9; }
    .sel .text { color: #fff; font-weight: 700; }
  `];
  render() {
    return html`<ul>${TREE.map((n) => html`<li class="l${n.level}">
      ${n.toggle ? html`<button class="toggle" aria-label="Toggle ${n.text}">${icon(n.toggle)}</button>` : html`<span class="toggle"></span>`}
      <div class="chip ${n.kind ?? ""} ${n.stitched ? "stitched" : ""}">
        ${n.eye ? html`<button class="eye" aria-label="Show ${n.text}">${icon("eye")}</button>` : nothing}
        ${n.kind === "chosen"
          ? html`<span class="sel">${icon(n.glyph)}<span class="text">${n.text}</span></span>`
          : html`${icon(n.glyph)}<span class="text">${n.text}</span>`}
        ${n.kind === "active" ? html`<input type="radio" checked aria-label="Activate ${n.text}">` : nothing}
      </div></li>`)}</ul>`;
  }
}

/* ---------- modelling canvas ---------- */

const OX = 954.5, OY = 620.3, STEP = 19.07, SLOPE = 0.5772;

/** One family of parallel ground lines; sign gives the direction of the slope. */
function lines(sign: number, step: number, skip: number): string {
  let d = "";
  const at = (x: number) => OY + sign * SLOPE * (x - OX);
  const low = Math.min(at(0), at(1920)), high = Math.max(at(0), at(1920));
  for (let n = Math.ceil((203 - high) / step); n <= (1032 - low) / step; n++) {
    if (skip && n % skip === 0) continue;
    d += `M0 ${(at(0) + n * step).toFixed(1)}L1920 ${(at(1920) + n * step).toFixed(1)}`;
  }
  return d;
}
const MINOR = [lines(1, STEP / 5, 5), lines(-1, STEP / 5, 5)];
const MAJOR = [lines(1, STEP, 0), lines(-1, STEP, 0)];
const RULER = [65, 60, 55, 50, 45, 40, 35, 30, 25, 20];

@customElement("app-canvas")
export class AppCanvas extends LitElement {
  static styles = [shared, css`
    :host { display: block; }
    .scene { display: block; width: 100%; height: 100%; background: #fff; }
    .minor { stroke: #000; stroke-opacity: 0.055; fill: none; }
    .major { stroke: #000; stroke-opacity: 0.18; fill: none; }
    .edge { stroke: #000; fill: none; }
    .path { stroke: #00e; fill: none; }
    .small { font-size: 12px; }
    .face { font-size: 10px; font-weight: 700; fill: #4d535e; text-anchor: middle; }
    .ruler { font-size: 14px; fill: #777; text-anchor: middle; }
  `];
  render() {
    return html`<svg class="scene" viewBox="0 203 1920 829" preserveAspectRatio="xMidYMid slice" role="img" aria-label="Model view">
      <defs>
        <clipPath id="ground"><path d="M290 203H1920V1032H187L0 924V370z"/></clipPath>
        <linearGradient id="top" x1="0" y1="0" x2=".3" y2="1"><stop stop-color="#716f67"/><stop offset=".55" stop-color="#69645c"/><stop offset="1" stop-color="#68645b"/></linearGradient>
        <linearGradient id="front" x1="0" y1="0" x2="1" y2="1"><stop stop-color="#6a6c66"/><stop offset="1" stop-color="#6d706a"/></linearGradient>
        <linearGradient id="side" x1="0" y1="1" x2="1" y2="0"><stop stop-color="#514e46"/><stop offset="1" stop-color="#5a564e"/></linearGradient>
        <linearGradient id="cubeSide" x2="0" y2="1"><stop stop-color="#efefef"/><stop offset="1" stop-color="#cfcfcf"/></linearGradient>
        <radialGradient id="shadow"><stop offset=".5" stop-color="#777" stop-opacity=".6"/><stop offset="1" stop-color="#999" stop-opacity="0"/></radialGradient>
      </defs>
      <g clip-path="url(#ground)">
        <g shape-rendering="crispEdges">
          ${MINOR.map((d) => svg`<path class="minor" d=${d}/>`)}
          ${MAJOR.map((d) => svg`<path class="major" d=${d}/>`)}
          <path d="M234 204 1672 1034" stroke="#ff9090"/>
          <path d="M234 1036 1684 199" stroke="#90f590"/>
        </g>
      </g>
      ${RULER.map((n, i) => svg`<text class="ruler" transform="matrix(.87 -.5 .5 .45 ${15 + i * 16.5} ${924 + i * 9.53})">${n}</text>`)}
      <path d="M0 370.500 290 203M0 923.500 188 1032" stroke="#666" fill="none" shape-rendering="crispEdges"/>

      <path class="path" d="M955 602 940 610.500Q923 620 938 629.700L1238.700 802.700Q1252 809 1265.500 802.700L1468.300 685.700Q1480 677 1468 668L1450 658"/>
      <circle cx="951" cy="620.500" r="4.500" fill="#ddd" stroke="#bbb" stroke-width="2"/>
      <path d="M954.500 544.500 1252.500 715V791.500L954.500 620z" fill="url(#front)"/>
      <path d="M1252.500 715 1450.500 601.500V677.500L1252.500 791.500z" fill="url(#side)"/>
      <path d="M1153.500 430 1450.500 601.500 1252.500 715 954.500 544.500z" fill="url(#top)"/>
      <g shape-rendering="crispEdges">
        <path class="edge" d="M954.500 620V544.500L1153.500 430 1450.500 601.500V677.500L1252.500 791.500V715M954.500 544.500 1252.500 715 1450.500 601.500"/>
        <path d="M954.500 620 1252.500 791.500" stroke="#701010"/>
        <path d="M1176.500 349V389" stroke="#ff0"/><path d="M1176.500 389V443" stroke="#b80000"/><path d="M1182.500 354V446" stroke="#ff0"/>
      </g>
      <path d="M1153 203h47v110c0 15-11 23.500-23.500 23.500S1153 328 1153 313z" fill="#707070" fill-opacity=".45"/>
      <ellipse cx="1176.500" cy="218" rx="23.500" ry="13" fill="#555" fill-opacity=".4"/>
      <path d="M1173 334q3.500-2 7 0v5l-3 12h-1l-3-12z" fill="red"/><path d="M1183 341l4 13v3h-8v-3z" fill="#0f0"/>

      <path d="M1202.500 569V545" stroke="#101058" stroke-width="1.600"/><path d="M1202.500 537l3.500 9h-7z" fill="#2424c8"/>
      <path d="M1202.500 569 1224 556" stroke="#0a9a0a" stroke-width="2"/><path d="M1230 553l-9 1 4 5z" fill="#0b6b0b"/>
      <path d="M1202.500 569 1224 581" stroke="#e02020" stroke-width="2"/><path d="M1230 585l-9-1 4-6z" fill="#c01010"/>
      <text class="small" x="1198" y="534" fill="#2020d0">Z</text><text class="small" x="1231" y="554" fill="#18b018">Y</text><text class="small" x="1232" y="593" fill="#c82020">X</text>

      <ellipse cx="1860" cy="291" rx="46" ry="22" fill="url(#shadow)"/>
      <path d="M1822 246 1856.500 266V306L1825 285.500z" fill="url(#cubeSide)"/><path d="M1856.500 266 1891.500 246.500 1888 284 1856.500 306z" fill="url(#cubeSide)"/>
      <path d="M1856.500 230.500 1891.500 246.500 1856.500 266 1822 246z" fill="#ececec"/>
      <path d="M1822 246 1856.500 230.500 1891.500 246.500 1888 284 1856.500 306 1825 285.500zM1822 246 1856.500 266V306M1856.500 266 1891.500 246.500" fill="none" stroke="#666"/>
      <path d="M1849 263l7.500-4.500 7.500 4.500v7l-7.500 4-7.500-4z" fill="#8e9db5" fill-opacity=".55"/>
      <text class="face" transform="matrix(.75 .36 -.65 .5 1855 249)">TOP</text>
      <text class="face" transform="matrix(.66 .4 0 1.1 1839 281)">FRONT</text>
      <text class="face" transform="matrix(.66 -.4 0 1.1 1875 281)">RIGHT</text>
      <path d="M1820 239 1825 286" stroke="#00f" stroke-width="2"/><path d="M1825 286 1862 313" stroke="red" stroke-width="2"/>
      <text x="1815" y="237" font-size="14" fill="#22f">Z</text><text x="1863" y="322" font-size="14" fill="#f22">X</text>
      <path d="M1804.500 228.500v-8h-2l9-8.500 3.500 3v-2h2v4l4 3.500h-2.500v8z" fill="#fff" stroke="#888"/><path d="M1810 221h3v7h-3z" fill="#666"/>
      <path d="M1896.500 306.500h12v3h-12zM1896.500 311.500h12l-6 6z" fill="#fff" stroke="#888"/>
    </svg>`;
  }
}

/* ---------- view toolbar ---------- */

const VIEW: { n: string; menu?: boolean; wide?: boolean; end?: boolean }[] = [
  { n: "orbit", menu: true, wide: true }, { n: "look" }, { n: "hand" }, { n: "zoom" }, { n: "window", menu: true, wide: true, end: true },
  { n: "display", menu: true }, { n: "grid", menu: true, end: true },
  { n: "views", menu: true }, { n: "slice", menu: true }, { n: "refresh", menu: true },
];

@customElement("app-viewbar")
export class AppViewbar extends LitElement {
  static styles = [shared, css`
    :host { display: block; }
    .bar { display: flex; align-items: center; gap: 10px; height: 30px; padding: 0 14px 0 5px; background: #f1f1f1; }
    .menu { gap: 4px; margin-right: 1px; }
    .wide { gap: 6px; margin-right: 0; }
    .end { margin-right: 8px; }
  `];
  render() {
    return html`<nav class="bar">${VIEW.map((v) => html`<button class="${v.menu ? "menu" : ""} ${v.wide ? "wide" : ""} ${v.end ? "end" : ""}" aria-label=${v.n}>${icon(v.n)}${v.menu ? caret : nothing}</button>`)}</nav>`;
  }
}

@customElement("app-root")
export class AppRoot extends LitElement {
  static styles = [shared, css`
    :host { display: flex; flex-direction: column; height: 100vh; overflow: hidden; }
    .stage { position: relative; flex: 1; min-height: 0; }
    .canvas { height: 100%; }
    .left { position: absolute; inset: 4px auto 4px 4px; width: 300px; display: flex; flex-direction: column; justify-content: space-between; }
    .bottom { position: absolute; left: 50%; bottom: 4px; transform: translateX(-50%); }
    .status { position: absolute; right: 40px; bottom: 10px; font-size: 14px; color: #222; }
  `];
  render() {
    return html`
      <app-titlebar></app-titlebar><app-docbar></app-docbar><app-ribbon></app-ribbon><app-offer></app-offer>
      <main class="stage">
        <app-canvas class="canvas"></app-canvas>
        <div class="left"><div><app-panel heading="BROWSER"></app-panel><app-tree></app-tree></div><app-panel heading="COMMENTS" collapsed></app-panel></div>
        <app-viewbar class="bottom"></app-viewbar>
        <span class="status">2D Contour1</span>
      </main>`;
  }
}
